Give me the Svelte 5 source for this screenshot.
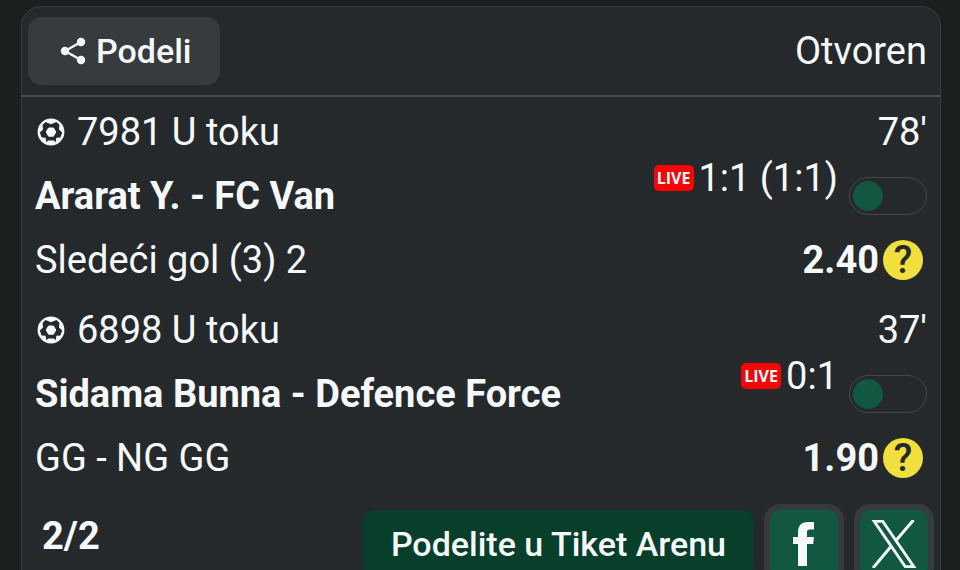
<script lang="ts">
  interface Match {
    code: number;
    status: string;
    minute: string;
    teams: string;
    score: string;
    bet: string;
    odds: string;
    notify: boolean;
  }

  let matches: Match[] = $state([
    {
      code: 7981,
      status: 'U toku',
      minute: "78'",
      teams: 'Ararat Y. - FC Van',
      score: '1:1 (1:1)',
      bet: 'Sledeći gol (3) 2',
      odds: '2.40',
      notify: false
    },
    {
      code: 6898,
      status: 'U toku',
      minute: "37'",
      teams: 'Sidama Bunna - Defence Force',
      score: '0:1',
      bet: 'GG - NG GG',
      odds: '1.90',
      notify: false
    }
  ]);
</script>

<main class="page">
  <section class="ticket">
    <header class="ticket-header">
      <button type="button" class="share">
        <svg width="26" height="28" viewBox="0 0 26 28" aria-hidden="true">
          <path d="M21 5 5 14l16 9" fill="none" stroke="currentColor" stroke-width="2.4" />
          <circle cx="21" cy="5" r="4.2" fill="currentColor" />
          <circle cx="5" cy="14" r="4.2" fill="currentColor" />
          <circle cx="21" cy="23" r="4.2" fill="currentColor" />
        </svg>
        Podeli
      </button>
      <span>Otvoren</span>
    </header>

    <div class="matches">
      {#each matches as match (match.code)}
        <article class="match">
          <div class="row">
            <svg class="ball" width="28" height="28" viewBox="0 0 28 28" aria-hidden="true">
              <circle cx="14" cy="14" r="13.4" fill="currentColor" />
              <path
                class="ball-seams"
                d="M8.600 4 14 6.200 19.400 4 22.400 6.800 22 11.400 25.200 14.600 23.400 19.600 19.400 19.800 18.600 24.600 17 22.400H11L9.400 24.600 8.600 19.800 4.600 19.600 2.800 14.600 6 11.400 5.600 6.800z"
              />
              <path d="M11.600 10h4.800l2.400 4-2.400 4.200h-4.800L9.200 14z" fill="currentColor" stroke="currentColor" stroke-linejoin="round" />
            </svg>
            <span>{match.code} {match.status}</span>
            <span class="end">{match.minute}</span>
          </div>
          <div class="row">
            <strong>{match.teams}</strong>
            <div class="score end">
              <span class="live">LIVE</span>
              {match.score}
            </div>
            <input
              class="toggle"
              type="checkbox"
              role="switch"
              aria-label={match.teams}
              bind:checked={match.notify}
            />
          </div>
          <div class="row">
            <span>{match.bet}</span>
            <strong class="end">{match.odds}</strong>
            <span class="pending">?</span>
          </div>
        </article>
      {/each}
    </div>

    <footer class="ticket-footer">
      <strong class="count">2/2</strong>
      <button type="button" class="arena">Podelite u Tiket Arenu</button>
      <button type="button" class="social" aria-label="Facebook">
        <svg width="22" height="44" viewBox="0 0 22 44" aria-hidden="true">
          <path d="M5 44V22H0v-7h5v-4C5 3.500 8 0 15 0h6v7.500h-4c-2.500 0-3 1-3 3V15h7l-.8 7H14v22z" fill="currentColor" />
        </svg>
      </button>
      <button type="button" class="social" aria-label="X">
        <svg width="46" height="48" viewBox="0 0 46 48" aria-hidden="true">
          <path d="M3.200 1.400h8.600l31 45.200h-8.600z" fill="none" stroke="currentColor" stroke-width="2.800" />
          <path d="M42.500 0 25 20.500M19.500 27 2 48" fill="none" stroke="currentColor" stroke-width="3" />
        </svg>
      </button>
    </footer>
  </section>
</main>

<style>
  :global(html) {
    scrollbar-width: none;
  }

  :global(body) {
    margin: 0;
    background: #1c1f20;
  }

  .page {
    padding: 6px 19px 20px 21px;
    color: #f6f9fc;
    font-family: Roboto, 'Liberation Sans', sans-serif;
    font-size: 38px;
    line-height: 64px;
  }

  button {
    margin: 0;
    border: 0;
    color: inherit;
    font: inherit;
    font-weight: 500;
    cursor: pointer;
  }

  strong {
    font-weight: 700;
  }

  .ticket {
    border: 1px solid #3b3e41;
    border-radius: 20px;
    background: #26292c;
  }

  .ticket-header {
    display: flex;
    align-items: center;
    justify-content: space-between;
    padding: 10px 13px 10px 6px;
    border-bottom: 2px solid #4a4d50;
  }

  .share {
    display: flex;
    align-items: center;
    gap: 10px;
    padding: 0 29px 0 32px;
    border-radius: 14px;
    background: #373b3e;
    font-size: 34px;
    line-height: 68px;
  }

  .matches {
    display: flex;
    flex-direction: column;
    gap: 6px;
    padding: 3px 13px 0;
  }

  .row {
    display: flex;
    align-items: center;
    height: 64px;
    white-space: nowrap;
  }

  .end {
    margin-left: auto;
  }

  .ball {
    margin: 0 12px 0 2px;
  }

  .ball-seams {
    fill: #26292c;
  }

  .score {
    display: flex;
    align-self: flex-start;
    align-items: center;
    gap: 5px;
    margin-right: 11px;
    line-height: 28px;
  }

  .live {
    width: 40px;
    border-radius: 5px;
    background: #f60505;
    font-family: 'Open Sans', 'Noto Sans', sans-serif;
    font-size: 16px;
    font-weight: 700;
    line-height: 26px;
    text-align: center;
  }

  .toggle {
    display: flex;
    align-items: center;
    box-sizing: border-box;
    width: 78px;
    height: 38px;
    margin: 0;
    padding: 0 3px;
    appearance: none;
    border: 1px solid #45484b;
    border-radius: 20px;
    cursor: pointer;
  }

  .toggle::before {
    content: '';
    width: 30px;
    height: 30px;
    border-radius: 50%;
    background: #12573f;
  }

  .toggle:checked {
    justify-content: flex-end;
  }

  .pending {
    width: 40px;
    margin: 0 4px;
    border-radius: 50%;
    background: #f0df3c;
    color: #26292c;
    font-weight: 500;
    line-height: 40px;
    text-align: center;
  }

  .ticket-footer {
    display: flex;
    align-items: center;
    gap: 10px;
    padding: 14px 6px 14px 20px;
  }

  .count {
    align-self: flex-start;
    margin-right: auto;
  }

  .arena {
    padding: 0 28px;
    border-radius: 12px;
    background: #073f2b;
    font-size: 34px;
    line-height: 68px;
  }

  .social {
    display: flex;
    align-items: center;
    justify-content: center;
    width: 80px;
    height: 80px;
    padding: 0;
    border: 6px solid #373b3e;
    border-radius: 16px;
    background: #12573f;
  }
</style>
